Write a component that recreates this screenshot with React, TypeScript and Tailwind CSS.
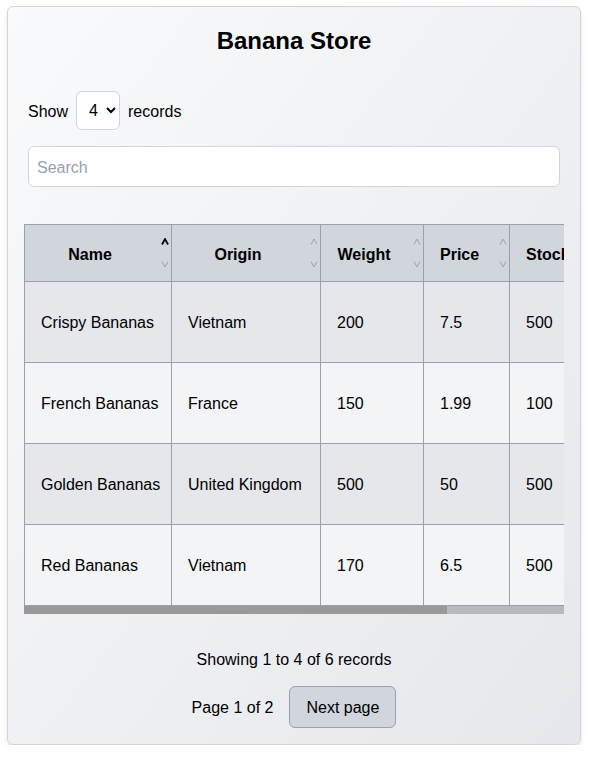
import React from "react";

type Banana = {
  name: string;
  origin: string;
  weight: number;
  price: number;
  stock: number;
  color: string;
};

const bananas: Banana[] = [
  { name: "Crispy Bananas", origin: "Vietnam", weight: 200, price: 7.5, stock: 500, color: "Yellow" },
  { name: "French Bananas", origin: "France", weight: 150, price: 1.99, stock: 100, color: "Yellow" },
  { name: "Golden Bananas", origin: "United Kingdom", weight: 500, price: 50, stock: 500, color: "Gold" },
  { name: "Red Bananas", origin: "Vietnam", weight: 170, price: 6.5, stock: 500, color: "Red" },
  { name: "Blue Java", origin: "Indonesia", weight: 120, price: 9, stock: 80, color: "Blue" },
  { name: "Lady Finger", origin: "Australia", weight: 90, price: 3.2, stock: 240, color: "Yellow" },
];

const columns = [
  { key: "name", label: "Name", width: "w-[147px]" },
  { key: "origin", label: "Origin", width: "w-[149px]" },
  { key: "weight", label: "Weight", width: "w-[103px]" },
  { key: "price", label: "Price", width: "w-[86px]" },
  { key: "stock", label: "Stock", width: "w-[90px]" },
  { key: "color", label: "Color", width: "w-[114px]" },
] as const;

function Chevron({ up, active }: { up?: boolean; active?: boolean }) {
  return (
    <svg width="8" height="7" viewBox="0 0 8 7" fill="none" className="block">
      <polyline
        points={up ? "1,6.5 4,1 7,6.5" : "1,0.5 4,6 7,0.5"}
        stroke={active ? "#000000" : "#9ca3af"}
        strokeWidth={active ? 1.8 : 1}
      />
    </svg>
  );
}

const cell = "whitespace-nowrap border border-gray-400 px-4 pt-[29px] pb-[27px] leading-6";

export default function App() {
  const perPage = 4;
  const rows = bananas.slice(0, perPage);

  return (
    <div className="font-['Liberation_Sans',Arial,sans-serif] text-black">
      <div className="ml-[7px] mt-[6px] w-[574px] rounded-md border border-gray-300 bg-linear-to-br from-gray-50 to-gray-200 px-5 pb-4 pt-[18px] shadow-md">
        <h1 className="text-center text-2xl font-bold leading-8">Banana Store</h1>

        <div className="mt-[34px] flex items-center gap-2 text-base">
          <span className="pt-[2px]">Show</span>
          <select
            defaultValue="4"
            className="h-[39px] w-[44px] rounded-md border border-gray-300 bg-white pl-2 text-base"
          >
            <option value="2">2</option>
            <option value="4">4</option>
            <option value="6">6</option>
          </select>
          <span className="pt-[2px]">records</span>
        </div>

        <input
          type="text"
          placeholder="Search"
          className="mt-4 block h-[41px] w-full rounded-md border border-gray-300 bg-white px-2 pt-[2px] text-base placeholder:text-gray-400"
        />

        <div className="-mx-1 mt-[37px]">
          <div className="overflow-hidden">
            <table className="w-[689px] table-fixed border-collapse border border-gray-400 text-base">
              <thead>
                <tr className="bg-gray-300">
                  {columns.map((col, i) => (
                    <th
                      key={col.key}
                      className={`${col.width} relative whitespace-nowrap border border-gray-400 pb-[14px] pl-4 pr-8 pt-[18px] text-center font-bold leading-6`}
                    >
                      {col.label}
                      <span className="absolute inset-y-0 right-[2px] flex flex-col justify-between py-[13px]">
                        <Chevron up active={i === 0} />
                        <Chevron />
                      </span>
                    </th>
                  ))}
                </tr>
              </thead>
              <tbody>
                {rows.map((b, i) => (
                  <tr key={b.name} className={i % 2 === 0 ? "bg-gray-200" : "bg-gray-100"}>
                    <td className={cell}>{b.name}</td>
                    <td className={cell}>{b.origin}</td>
                    <td className={cell}>{b.weight}</td>
                    <td className={cell}>{b.price}</td>
                    <td className={cell}>{b.stock}</td>
                    <td className={cell}>{b.color}</td>
                  </tr>
                ))}
              </tbody>
            </table>
          </div>
          {/* horizontal scrollbar */}
          <div className="h-2 bg-[#b8b9bc]">
            <div className="h-full w-[423px] bg-[#999999]" />
          </div>
        </div>

        <p className="mt-[34px] text-center leading-6">
          Showing 1 to {rows.length} of {bananas.length} records
        </p>

        <div className="mt-[14px] flex items-center justify-center gap-4">
          <span className="pt-[2px] leading-6">Page 1 of 2</span>
          <button className="rounded-md border border-gray-400 bg-gray-300 px-4 pb-[7px] pt-[9px] leading-6">
            Next page
          </button>
        </div>
      </div>
    </div>
  );
}
